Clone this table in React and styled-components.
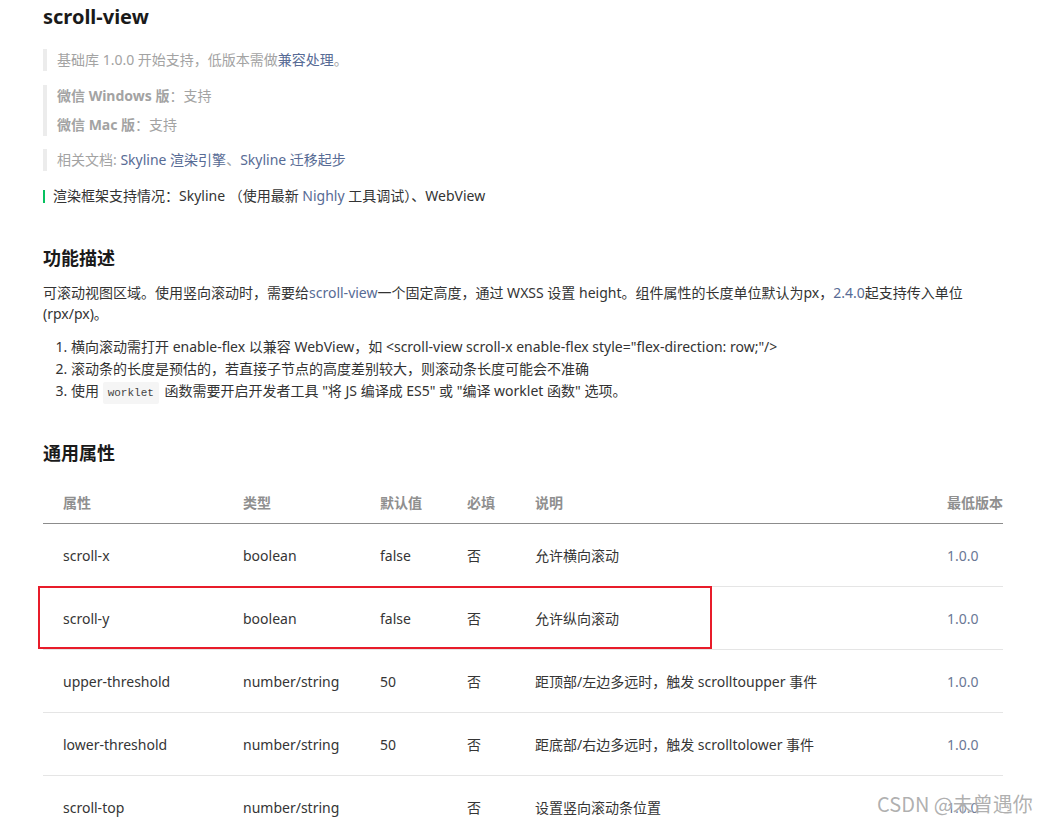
import React from 'react'
import styled, { createGlobalStyle } from 'styled-components'

const GlobalStyle = createGlobalStyle`
  html, body {
    margin: 0;
    padding: 0;
    height: 824px;
    overflow: hidden;
    background: #fff;
  }
  body {
    font-family: "Noto Sans", "Noto Sans CJK SC", sans-serif;
    font-size: 14px;
    color: #353535;
  }
`

const Page = styled.div`
  position: relative;
  width: 960px;
  padding: 3px 0 0 43px;
`

const Title = styled.h1`
  margin: 0;
  font-size: 20px;
  line-height: 28px;
  font-weight: 700;
  color: #1a1a1a;
`

const Quote = styled.div`
  margin-top: ${p => p.$gap}px;
  border-left: 4px solid #ececec;
  padding-left: 10px;
  display: flex;
  flex-direction: column;
  gap: 7px;
  color: #a3a3a3;
`

const Line = styled.p`
  margin: 0;
  line-height: 22px;
`

const Strong = styled.b`
  font-weight: 700;
`

const Link = styled.span`
  color: #576b95;
`

const Notice = styled.div`
  margin-top: 14px;
  display: flex;
  align-items: center;
  line-height: 22px;
  color: #333;
  white-space: pre;
`

const GreenBar = styled.span`
  width: 2px;
  height: 13px;
  background: #07c160;
  margin-right: 8px;
`

const Heading = styled.h2`
  margin: ${p => p.$gap}px 0 0;
  font-size: 18px;
  line-height: 28px;
  font-weight: 700;
  color: #1a1a1a;
`

const Para = styled.p`
  margin: 10px 0 0;
  line-height: 21px;
  color: #333;
`

const List = styled.ol`
  margin: 12px 0 0;
  padding-left: 28px;
  color: #333;

  li {
    line-height: 22px;
  }
`

const Code = styled.code`
  font-family: "Liberation Mono", "DejaVu Sans Mono", monospace;
  font-size: 11px;
  line-height: 12px;
  background: #f5f5f5;
  color: #444;
  padding: 5px 5px;
  margin: 0 2px 0 0;
  border-radius: 2px;
`

const Table = styled.div`
  margin-top: 14px;
  width: 960px;
`

const Row = styled.div`
  position: relative;
  display: grid;
  grid-template-columns: 180px 137px 87px 68px 412px 76px;
  height: ${p => (p.$head ? 42 : 62)}px;
  align-items: center;
  border-bottom: 1px solid ${p => (p.$head ? '#8c8c8c' : '#e5e5e5')};
  color: ${p => (p.$head ? '#8f8f8f' : '#353535')};
  font-weight: ${p => (p.$head ? 700 : 400)};
`

const Cell = styled.div`
  padding-left: 20px;
  white-space: nowrap;
  color: ${p => (p.$version ? '#6a7895' : 'inherit')};
`

const Highlight = styled.div`
  position: absolute;
  left: -5px;
  top: -1px;
  width: 674px;
  height: 63px;
  box-sizing: border-box;
  border: 2px solid #e81c2a;
  pointer-events: none;
`

const Watermark = styled.div`
  position: absolute;
  left: 877px;
  top: 790px;
  font-family: "Noto Sans CJK SC", sans-serif;
  font-size: 20px;
  line-height: 28px;
  color: rgba(150, 150, 150, 0.75);
  text-shadow: 0 0 2px #fff;
  white-space: nowrap;
`

const columns = ['属性', '类型', '默认值', '必填', '说明', '最低版本']

const rows = [
  ['scroll-x', 'boolean', 'false', '否', '允许横向滚动', '1.0.0'],
  ['scroll-y', 'boolean', 'false', '否', '允许纵向滚动', '1.0.0'],
  ['upper-threshold', 'number/string', '50', '否', '距顶部/左边多远时，触发 scrolltoupper 事件', '1.0.0'],
  ['lower-threshold', 'number/string', '50', '否', '距底部/右边多远时，触发 scrolltolower 事件', '1.0.0'],
  ['scroll-top', 'number/string', '', '否', '设置竖向滚动条位置', '1.0.0'],
]

export default function App() {
  return (
    <>
      <GlobalStyle />
      <Page>
        <Title>scroll-view</Title>

        <Quote $gap={18}>
          <Line>基础库 1.0.0 开始支持，低版本需做<Link>兼容处理</Link>。</Line>
        </Quote>
        <Quote $gap={14}>
          <Line><Strong>微信 Windows 版</Strong>：支持</Line>
          <Line><Strong>微信 Mac 版</Strong>：支持</Line>
        </Quote>
        <Quote $gap={13}>
          <Line>相关文档: <Link>Skyline 渲染引擎</Link>、<Link>Skyline 迁移起步</Link></Line>
        </Quote>

        <Notice>
          <GreenBar />
          渲染框架支持情况：Skyline （使用最新 <Link>Nighly</Link> 工具调试）、WebView
        </Notice>

        <Heading $gap={37}>功能描述</Heading>
        <Para>
          可滚动视图区域。使用竖向滚动时，需要给<Link>scroll-view</Link>一个固定高度，通过 WXSS 设置 height。组件属性的长度单位默认为px，<Link>2.4.0</Link>起支持传入单位(rpx/px)。
        </Para>
        <List>
          <li>横向滚动需打开 enable-flex 以兼容 WebView，如 &lt;scroll-view scroll-x enable-flex style="flex-direction: row;"/&gt;</li>
          <li>滚动条的长度是预估的，若直接子节点的高度差别较大，则滚动条长度可能会不准确</li>
          <li>使用 <Code>worklet</Code> 函数需要开启开发者工具 "将 JS 编译成 ES5" 或 "编译 worklet 函数" 选项。</li>
        </List>

        <Heading $gap={37}>通用属性</Heading>
        <Table>
          <Row $head>
            {columns.map(c => (
              <Cell key={c}>{c}</Cell>
            ))}
          </Row>
          {rows.map((r, i) => (
            <Row key={r[0]}>
              {r.map((v, j) => (
                <Cell key={j} $version={j === 5}>{v}</Cell>
              ))}
              {i === 1 && <Highlight />}
            </Row>
          ))}
        </Table>

        <Watermark>CSDN @未曾遇你</Watermark>
      </Page>
    </>
  )
}
